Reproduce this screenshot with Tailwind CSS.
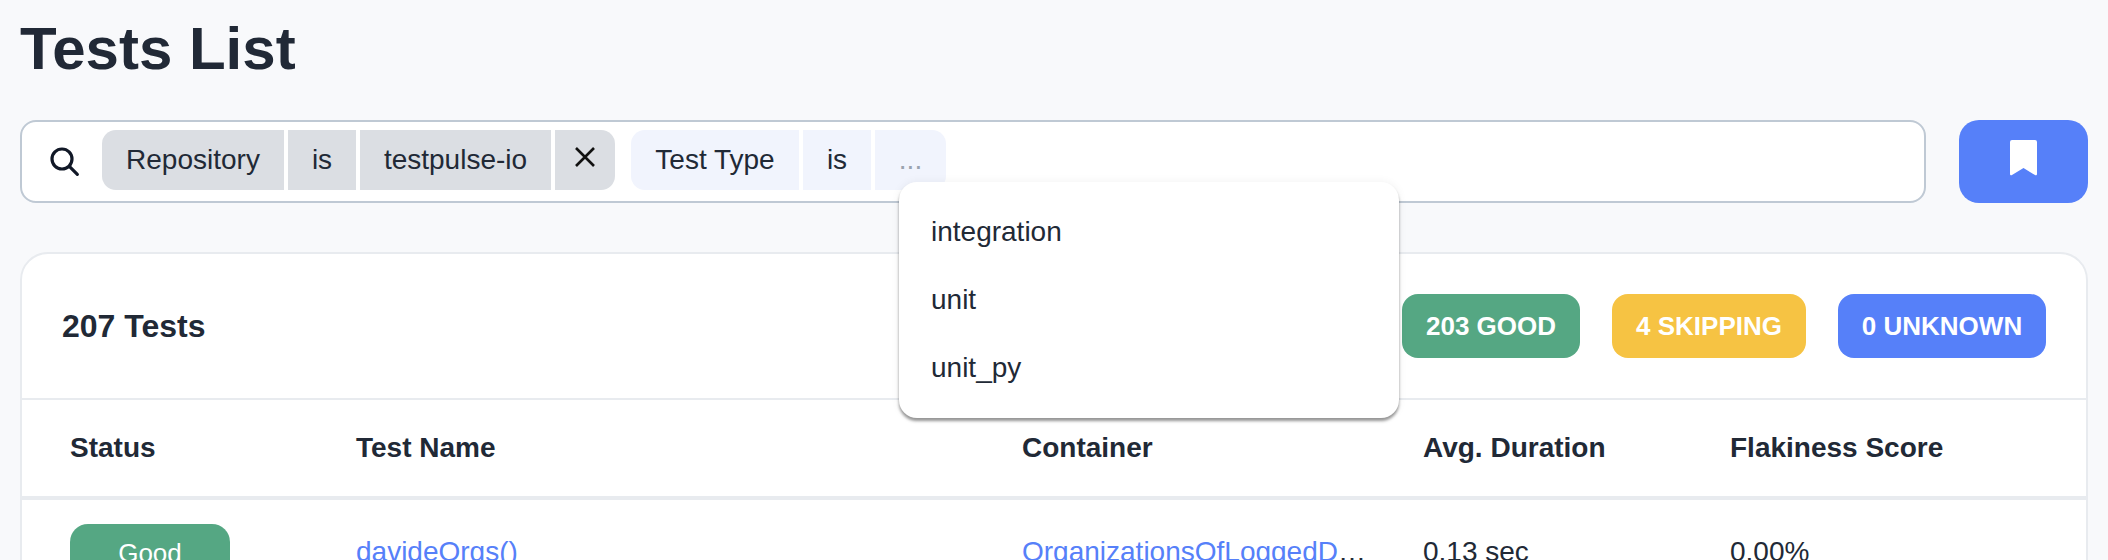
<!DOCTYPE html>
<html lang="en">
  <head>
    <meta charset="UTF-8">
    <title>Tests List</title>
    <script src="https://cdn.jsdelivr.net/npm/@tailwindcss/browser@4"></script>
  </head>
  <body class="bg-[#f8f9fb] text-[#212936] font-['Liberation_Sans',Arial,sans-serif] text-[28px] overflow-hidden">
    <main class="h-[560px] overflow-hidden px-[20px]">
      <h1 class="text-[60px] font-bold leading-[70px] h-[120px] pt-[14px]">Tests List</h1>

      <!-- Filter bar -->
      <div class="flex gap-[33px] h-[83px]">
        <div class="relative flex-1 flex items-center bg-white border-2 border-[#bfc9d4] rounded-[16px] pl-[26px]">
          <svg class="w-[32px] h-[32px] mr-[22px] mb-[2px] shrink-0" viewBox="0 0 24 24" fill="none" stroke="#111827" stroke-width="2.4" stroke-linecap="round"><circle cx="10.5" cy="10.5" r="7.5"/><path d="M16 16l6 6"/></svg>
          <div class="flex gap-[4px] h-[60px] leading-[60px] mb-[3px]">
            <span class="bg-[#dbdee3] w-[182px] text-center rounded-l-[14px]">Repository</span>
            <span class="bg-[#dbdee3] w-[68px] text-center">is</span>
            <span class="bg-[#dbdee3] w-[191px] text-center">testpulse-io</span>
            <span class="bg-[#dbdee3] w-[60px] rounded-r-[14px] flex items-center justify-center pb-[6px]">
              <svg class="w-[22px] h-[20px]" viewBox="0 0 22 20" fill="none" stroke="#111" stroke-width="2.6"><path d="M2 1l18 18M20 1L2 19"/></svg>
            </span>
          </div>
          <div class="flex gap-[4px] h-[60px] leading-[60px] ml-[16px] mb-[3px]">
            <span class="bg-[#f1f4fd] w-[168px] text-center rounded-l-[14px]">Test Type</span>
            <span class="bg-[#f1f4fd] w-[68px] text-center">is</span>
            <span class="bg-[#f1f4fd] w-[71px] text-center text-[#9aa3af] rounded-r-[14px]">...</span>
          </div>

          <!-- Value dropdown -->
          <ul class="absolute z-10 left-[877px] top-[60px] w-[500px] h-[236px] py-[16px] bg-white rounded-[18px] shadow-[0_3px_3px_rgba(0,0,0,0.4),0_0_10px_rgba(0,0,0,0.06)]">
            <li class="h-[68px] leading-[68px] pl-[32px]">integration</li>
            <li class="h-[68px] leading-[68px] pl-[32px]">unit</li>
            <li class="h-[68px] leading-[68px] pl-[32px]">unit_py</li>
          </ul>
        </div>
        <button class="w-[129px] bg-[#5680f9] rounded-[20px] flex items-center justify-center">
          <svg class="w-[27px] h-[36px] mb-[8px]" viewBox="0 0 27 36" fill="#fff"><path d="M2 0h23a2 2 0 0 1 2 2v32a1.2 1.2 0 0 1-2 1l-11.500-7-11.500 7a1.200 1.200 0 0 1-2-1V2a2 2 0 0 1 2-2z"/></svg>
        </button>
      </div>

      <!-- Tests card -->
      <section class="mt-[49px] bg-white border-2 border-[#e8ebef] rounded-[28px]">
        <div class="flex items-center justify-between h-[146px] pl-[40px] pr-[40px] border-b-2 border-[#e8ebef]">
          <h2 class="text-[32px] font-bold">207 Tests</h2>
          <div class="flex gap-[32px] text-[26px] font-bold text-white">
            <span class="bg-[#55a783] w-[178px] text-center h-[64px] leading-[64px] rounded-[16px]">203 GOOD</span>
            <span class="bg-[#f6c343] w-[194px] text-center h-[64px] leading-[64px] rounded-[16px]">4 SKIPPING</span>
            <span class="bg-[#5680f9] w-[208px] text-center h-[64px] leading-[64px] rounded-[16px]">0 UNKNOWN</span>
          </div>
        </div>
        <table class="w-full table-fixed text-left">
          <colgroup>
            <col class="w-[334px]"><col class="w-[666px]"><col class="w-[401px]"><col class="w-[307px]"><col>
          </colgroup>
          <thead>
            <tr class="h-[98px] border-b-4 border-[#e8ebef] font-bold">
              <th class="pl-[48px]">Status</th>
              <th>Test Name</th>
              <th>Container</th>
              <th>Avg. Duration</th>
              <th>Flakiness Score</th>
            </tr>
          </thead>
          <tbody>
            <tr class="align-top leading-[56px]">
              <td class="pl-[48px] pt-[24px]"><span class="block w-[160px] h-[64px] leading-[58px] text-center text-[26px] text-white bg-[#55a783] rounded-[18px]">Good</span></td>
              <td class="pt-[24px]"><a class="text-[#5680f9]" href="#">davideOrgs()</a></td>
              <td class="pt-[24px] pr-[54px] truncate"><a class="text-[#5680f9]" href="#">OrganizationsOfLoggedDavideOrgs</a></td>
              <td class="pt-[24px]">0.13 sec</td>
              <td class="pt-[24px]">0.00%</td>
            </tr>
          </tbody>
        </table>
      </section>
    </main>
  </body>
</html>
